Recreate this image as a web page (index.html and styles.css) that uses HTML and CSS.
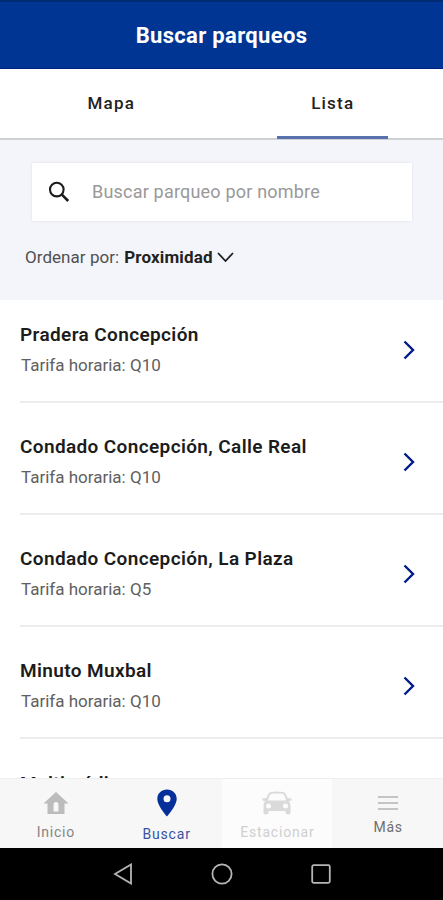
FILE: index.html
```html
<!DOCTYPE html>
<html lang="es">
<head>
<meta charset="utf-8">
<title>Buscar parqueos</title>
<link rel="stylesheet" href="styles.css">
</head>
<body>
<div class="app">
  <header class="header"><h1>Buscar parqueos</h1></header>
  <nav class="tabs">
    <a class="tab">Mapa</a>
    <a class="tab active"><span>Lista</span></a>
  </nav>
  <section class="filters">
    <div class="search">
      <svg width="22" height="22" viewBox="0 0 22 22" fill="none" stroke="#1c1c1c"><circle cx="8.800" cy="8.600" r="6.800" stroke-width="2.100"/><path d="M13.400 13.200L20.200 20" stroke-width="2.600"/></svg>
      <span>Buscar parqueo por nombre</span>
    </div>
    <div class="sort"><span>Ordenar por:</span><strong>Proximidad</strong>
      <svg width="17" height="10" viewBox="0 0 17 10" fill="none" stroke="#222" stroke-width="1.800"><path d="M1 1L8.500 9L16 1"/></svg>
    </div>
  </section>
  <main class="list">
    <article class="row"><div><h2>Pradera Concepción</h2><p>Tarifa horaria: Q10</p></div><svg class="chevron" viewBox="0 0 12 20"><path d="M1.500 1.500L10 10L1.500 18.500"/></svg></article>
    <article class="row"><div><h2>Condado Concepción, Calle Real</h2><p>Tarifa horaria: Q10</p></div><svg class="chevron" viewBox="0 0 12 20"><path d="M1.500 1.500L10 10L1.500 18.500"/></svg></article>
    <article class="row"><div><h2>Condado Concepción, La Plaza</h2><p>Tarifa horaria: Q5</p></div><svg class="chevron" viewBox="0 0 12 20"><path d="M1.500 1.500L10 10L1.500 18.500"/></svg></article>
    <article class="row"><div><h2>Minuto Muxbal</h2><p>Tarifa horaria: Q10</p></div><svg class="chevron" viewBox="0 0 12 20"><path d="M1.500 1.500L10 10L1.500 18.500"/></svg></article>
    <article class="row"><div><h2>Multimédica</h2></div></article>
  </main>
  <nav class="bottom">
    <a class="item home">
      <svg width="26" height="24" viewBox="0 0 26 24"><path fill="#bcbcbc" fill-rule="evenodd" d="M13 1L25.500 12.500H21.500V23H4.500V12.500H.500ZM10.500 20.500H15.500V14Q15.500 11 13 11Q10.500 11 10.500 14Z"/></svg>
      <span>Inicio</span>
    </a>
    <a class="item search-item">
      <svg width="20" height="28" viewBox="0 0 20 28"><path fill="#05309a" fill-rule="evenodd" d="M10 .5C4.500.5.3 4.500.3 9.800C.3 17 10 27.500 10 27.500S19.700 17 19.700 9.800C19.700 4.500 15.500.5 10 .5ZM10 6.200A3.500 3.500 0 1 1 10 13.200A3.500 3.500 0 0 1 10 6.200Z"/></svg>
      <span>Buscar</span>
    </a>
    <a class="item park">
      <svg width="30" height="24" viewBox="0 0 30 24"><path fill="#dadada" fill-rule="evenodd" d="M9 1Q15 0 21 1Q24 1.500 25.500 7L29.500 7.500V9.500L27 10Q28.500 12 28.500 15V22Q28.500 23.500 26 23.500T23.500 21.500V20H6.500V21.500Q6.500 23.500 4 23.500T1.500 22V15Q1.500 12 3 10L.5 9.500V7.500L4.500 7Q6 1.500 9 1ZM9.500 2.800Q7.500 3 6 9.500H24Q22.500 3 20.500 2.800Q15 2 9.500 2.800ZM6.500 12.500A2.500 2.500 0 1 0 6.500 17.500A2.500 2.500 0 0 0 6.500 12.500ZM23.500 12.500A2.500 2.500 0 1 0 23.500 17.500A2.500 2.500 0 0 0 23.500 12.500Z"/></svg>
      <span>Estacionar</span>
    </a>
    <a class="item more">
      <svg width="20" height="14" viewBox="0 0 20 14" stroke="#b5b5b5" stroke-width="1.600"><path d="M0 1H20M0 7H20M0 13H20"/></svg>
      <span>Más</span>
    </a>
  </nav>
  <div class="system">
    <svg width="20" height="22" viewBox="0 0 20 22"><path d="M18 1.500V20.500L2 11Z"/></svg>
    <svg width="22" height="22" viewBox="0 0 22 22"><circle cx="11" cy="11" r="9.600"/></svg>
    <svg width="20" height="20" viewBox="0 0 20 20"><rect x="1.200" y="1.200" width="17.600" height="17.600" rx="1.500"/></svg>
  </div>
</div>
</body>
</html>
```
FILE: styles.css
```css
* { box-sizing: border-box; margin: 0; padding: 0; }
body { font-family: Roboto, sans-serif; background: #fff; color: #222; }
svg { display: block; flex: none; }
.app { width: 443px; height: 900px; display: flex; flex-direction: column; overflow: hidden; }
.header { height: 69px; flex: none; background: #003594; border-top: 2px solid #002b72; border-bottom: 1px solid #00207f; padding-top: 1px; display: flex; align-items: center; justify-content: center; }
.header h1 { color: #fff; font-size: 22px; line-height: 26px; font-weight: 700; letter-spacing: .33px; }
.tabs { height: 71px; flex: none; display: flex; background: #fff; border-bottom: 2px solid #d0d1d5; padding-bottom: 1px; }
.tab { flex: 1; display: flex; align-items: center; justify-content: center; font-size: 17px; font-weight: 500; letter-spacing: 1.2px; padding-left: 1px; }
.tab.active span { width: 111px; height: 70px; line-height: 69px; text-align: center; border-bottom: 3px solid #5671ae; margin-bottom: -1px; }
.filters { height: 160px; flex: none; background: #f3f5fa; padding: 23px 31px 0 32px; }
.search { height: 58px; background: #fff; box-shadow: 0 0 2px #d8dae0; display: flex; align-items: center; padding-left: 16px; }
.search span { margin: 0 0 2px 22px; color: #999; font-size: 18px; letter-spacing: .2px; }
.sort { display: flex; align-items: center; margin: 25px 0 0 -7px; font-size: 17px; line-height: 22px; color: #505050; }
.sort span { letter-spacing: .05px; }
.sort strong { color: #222; margin: 0 4px 0 5px; letter-spacing: .15px; }
.list { height: 478px; flex: none; padding-left: 20px; overflow: hidden; }
.row { height: 112px; border-bottom: 2px solid #ececee; padding: 32px 28px 0 0; display: flex; justify-content: space-between; }
.row:first-child { height: 103px; padding-top: 22px; }
.row:not(:first-child) { padding-top: 31px; }
.row:last-child { padding-top: 32px; }
.row h2 { font-size: 19px; line-height: 26px; font-weight: 600; letter-spacing: .37px; color: #1c1c1c; }
.row p { font-size: 17px; line-height: 22px; margin: 6px 0 0 1px; color: #606060; }
.chevron { width: 12px; height: 20px; margin-top: 18px; fill: none; stroke: #001b87; stroke-width: 2.4; }
.bottom { height: 70px; flex: none; display: grid; grid-template-columns: repeat(4, 1fr); background: #f7f7f7; border-top: 1px solid #eee; }
.item { display: flex; flex-direction: column; align-items: center; font-size: 14px; line-height: 18px; letter-spacing: .8px; color: #858585; padding-left: 1px; }
.home { padding-top: 12px; }
.home span { margin-top: 8px; }
.search-item { padding-top: 10px; color: #3852a0; }
.search-item span { margin-top: 8px; }
.park { padding-top: 12px; background: #fcfcfc; color: #cfcfcf; }
.park span { margin-top: 8px; }
.more { padding-top: 17px; color: #6e6e6e; }
.more span { margin-top: 8px; }
.system { height: 52px; flex: none; background: #000; display: flex; align-items: center; justify-content: center; gap: 78px; fill: none; stroke: #b5b5b5; stroke-width: 1.8; }
```
